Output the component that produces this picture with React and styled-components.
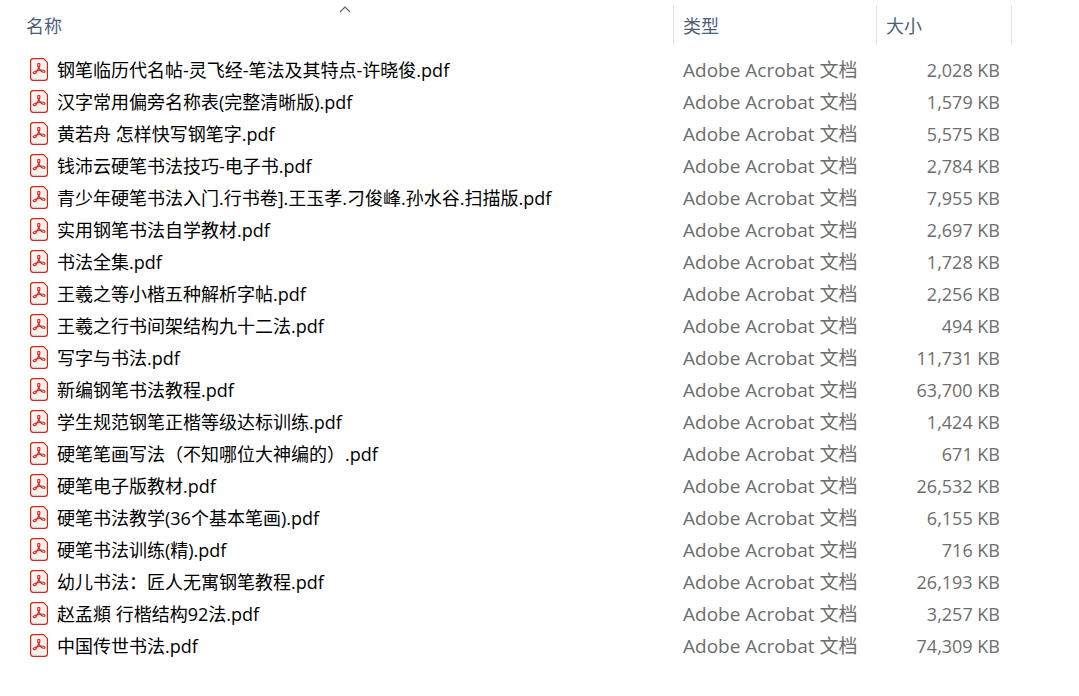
import styled, { createGlobalStyle } from "styled-components";

const GlobalStyle = createGlobalStyle`
    body {
        margin: 0;
        background: #ffffff;
        font-family: "Open Sans", "Noto Sans CJK SC", sans-serif;
        font-size: 18px;
    }
`;

const FileTable = styled.table`
    width: calc(100% - 84px);
    margin: 5px 67px 0 17px;
    border-collapse: separate;
    border-spacing: 0;
    table-layout: fixed;
`;

const Column = styled.col`
    width: ${(props) => props.$width};
`;

const HeaderCell = styled.th`
    height: 40px;
    padding: 0;
    border-right: 1px solid #e2e2e2;
    font-weight: 400;
`;

const SortButton = styled.button`
    position: relative;
    display: flex;
    align-items: center;
    width: 100%;
    height: 40px;
    padding: 0 9px;
    border: none;
    background: none;
    color: #4c607a;
    font: inherit;
    text-align: left;
    cursor: pointer;
`;

const SortArrow = styled.svg`
    position: absolute;
    top: 1px;
    left: 50%;
    width: 12px;
    height: 7px;
    margin-left: -6px;
`;

const FileBody = styled.tbody`
    &::before {
        content: "";
        display: table-row;
        height: 9px;
    }
`;

const FileRow = styled.tr`
    height: 32px;
    line-height: 32px;

    &:hover {
        background: #e5f3ff;
    }
`;

const NameCell = styled.td`
    padding: 0 13px;
    color: #000000;
`;

const FileName = styled.div`
    display: flex;
    align-items: center;
    gap: 9px;
    height: 32px;
    white-space: nowrap;
`;

const InfoCell = styled.td`
    padding: 0 12px 0 9px;
    color: #6d6d6d;
    white-space: nowrap;
`;

const TypeCell = styled(InfoCell)`
    font-size: 19px;
`;

const SizeCell = styled(InfoCell)`
    text-align: right;
`;

const Icon = styled.svg`
    flex: none;
    width: 18px;
    height: 24px;
`;

const files = [
    { name: "钢笔临历代名帖-灵飞经-笔法及其特点-许晓俊.pdf", size: "2,028 KB" },
    { name: "汉字常用偏旁名称表(完整清晰版).pdf", size: "1,579 KB" },
    { name: "黄若舟 怎样快写钢笔字.pdf", size: "5,575 KB" },
    { name: "钱沛云硬笔书法技巧-电子书.pdf", size: "2,784 KB" },
    { name: "青少年硬笔书法入门.行书卷].王玉孝.刁俊峰.孙水谷.扫描版.pdf", size: "7,955 KB" },
    { name: "实用钢笔书法自学教材.pdf", size: "2,697 KB" },
    { name: "书法全集.pdf", size: "1,728 KB" },
    { name: "王羲之等小楷五种解析字帖.pdf", size: "2,256 KB" },
    { name: "王羲之行书间架结构九十二法.pdf", size: "494 KB" },
    { name: "写字与书法.pdf", size: "11,731 KB" },
    { name: "新编钢笔书法教程.pdf", size: "63,700 KB" },
    { name: "学生规范钢笔正楷等级达标训练.pdf", size: "1,424 KB" },
    { name: "硬笔笔画写法（不知哪位大神编的）.pdf", size: "671 KB" },
    { name: "硬笔电子版教材.pdf", size: "26,532 KB" },
    { name: "硬笔书法教学(36个基本笔画).pdf", size: "6,155 KB" },
    { name: "硬笔书法训练(精).pdf", size: "716 KB" },
    { name: "幼儿书法：匠人无寓钢笔教程.pdf", size: "26,193 KB" },
    { name: "赵孟頫 行楷结构92法.pdf", size: "3,257 KB" },
    { name: "中国传世书法.pdf", size: "74,309 KB" },
];

const PdfIcon = () => (
    <Icon viewBox="0 0 18 24" fill="none" aria-hidden="true">
        <path
            d="M3.2 .6H13.6L17.4 4.4V19.8Q17.4 22.4 14.8 22.4H3.2Q.6 22.4 .6 19.8V3.2Q.6 .6 3.2 .6Z"
            fill="#faf4f3"
            stroke="#d0271f"
            strokeWidth="1.2"
        />
        <path
            d="M8.8 9.8C7.2 7.6 7.3 5.3 8.8 5.3S10.2 7.6 8.8 9.8C7.9 11.9 6.9 13.6 5.9 14.8C4.8 16.1 3 15.7 3.3 14.5C3.7 13.1 7.2 12.6 9.8 12.2C12.4 11.9 14.9 12.2 14.9 13.4C14.9 14.8 12.2 14.4 10.7 12.9C9.8 12 9.2 10.9 8.8 9.8Z"
            stroke="#e2231a"
            strokeWidth="1.2"
            strokeLinejoin="round"
        />
    </Icon>
);

const App = () => {
    return (
        <>
            <GlobalStyle />
            <FileTable>
                <colgroup>
                    <Column $width="auto" />
                    <Column $width="203px" />
                    <Column $width="135px" />
                </colgroup>
                <thead>
                    <tr>
                        <HeaderCell scope="col" aria-sort="ascending">
                            <SortButton type="button">
                                名称
                                <SortArrow viewBox="0 0 12 7" fill="none" aria-hidden="true">
                                    <path d="M1 6L6 1L11 6" stroke="#5f5f5f" strokeWidth="1.1" />
                                </SortArrow>
                            </SortButton>
                        </HeaderCell>
                        <HeaderCell scope="col">
                            <SortButton type="button">类型</SortButton>
                        </HeaderCell>
                        <HeaderCell scope="col">
                            <SortButton type="button">大小</SortButton>
                        </HeaderCell>
                    </tr>
                </thead>
                <FileBody>
                    {files.map((file) => (
                        <FileRow key={file.name}>
                            <NameCell>
                                <FileName>
                                    <PdfIcon />
                                    {file.name}
                                </FileName>
                            </NameCell>
                            <TypeCell>Adobe Acrobat 文档</TypeCell>
                            <SizeCell>{file.size}</SizeCell>
                        </FileRow>
                    ))}
                </FileBody>
            </FileTable>
        </>
    );
};

export default App;
